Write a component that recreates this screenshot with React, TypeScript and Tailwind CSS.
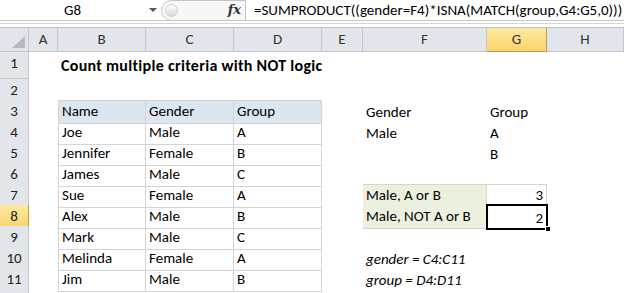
import React from 'react';

const font = "font-['Carlito','Lato',sans-serif]";
const gridCols = 'grid grid-cols-[29px_29px_88px_88px_88px_41px_124px_60px_1fr]';
const tbl = 'border-r border-b border-[#d4d4d4]';

type CellProps = {
  text?: string;
  className?: string;
};

function Cell({ text, className = '' }: CellProps) {
  return (
    <div className={`flex items-end overflow-visible whitespace-nowrap px-[3px] pb-[3px] text-[15px] leading-[17px] text-black ${className}`}>
      {text}
    </div>
  );
}

function RowHead({ n, active }: { n?: number; active?: boolean }) {
  return (
    <div
      className={`flex items-center justify-center border-r border-b text-[15px] text-[#222] ${
        active
          ? 'border-[#c29a4a] bg-gradient-to-b from-[#fde9a0] to-[#f9d46a]'
          : 'border-[#c3c7cd] bg-[#e2e5e9]'
      }`}
    >
      {n}
    </div>
  );
}

const people = [
  ['Joe', 'Male', 'A'],
  ['Jennifer', 'Female', 'B'],
  ['James', 'Male', 'C'],
  ['Sue', 'Female', 'A'],
  ['Alex', 'Male', 'B'],
  ['Mark', 'Male', 'C'],
  ['Melinda', 'Female', 'A'],
  ['Jim', 'Male', 'B'],
];

export default function App() {
  const colHeads = ['A', 'B', 'C', 'D', 'E', 'F', 'G', 'H'];

  const rightSide: Record<number, React.ReactNode[]> = {
    3: [<Cell key="e" />, <Cell key="f" text="Gender" />, <Cell key="g" text="Group" />, <Cell key="h" />],
    4: [<Cell key="e" />, <Cell key="f" text="Male" />, <Cell key="g" text="A" />, <Cell key="h" />],
    5: [<Cell key="e" />, <Cell key="f" />, <Cell key="g" text="B" />, <Cell key="h" />],
    6: [<Cell key="e" />, <Cell key="f" />, <Cell key="g" />, <Cell key="h" />],
    7: [
      <Cell key="e" />,
      <Cell key="f" text="Male, A or B" className={`${tbl} border-t bg-[#ebf1de]`} />,
      <Cell key="g" text="3" className={`${tbl} border-t justify-end`} />,
      <Cell key="h" />,
    ],
    8: [
      <Cell key="e" />,
      <Cell key="f" text="Male, NOT A or B" className={`${tbl} bg-[#ebf1de]`} />,
      <div key="g" className="relative">
        <div className="absolute left-[-1px] top-[-1px] right-[-1px] bottom-[-1px] flex items-end justify-end border-2 border-black bg-white pb-[1px] pr-[3px] text-[15px] leading-[17px] text-black">
          2
        </div>
        <div className="absolute bottom-[-3px] right-[-4px] h-[6px] w-[6px] border border-white bg-black" />
      </div>,
      <Cell key="h" />,
    ],
    9: [<Cell key="e" />, <Cell key="f" />, <Cell key="g" />, <Cell key="h" />],
    10: [<Cell key="e" />, <Cell key="f" text="gender = C4:C11" className="italic" />, <Cell key="g" />, <Cell key="h" />],
    11: [<Cell key="e" />, <Cell key="f" text="group = D4:D11" className="italic" />, <Cell key="g" />, <Cell key="h" />],
  };

  return (
    <div className={`h-[293px] w-[624px] overflow-hidden bg-white ${font}`}>
      {/* formula bar */}
      <div className="flex h-[21px] items-center border-b border-[#c6c6c6] bg-white">
        <div className="flex w-[145px] justify-center text-[15px] text-black">G8</div>
        <div className="flex w-[16px] justify-center">
          <div className="h-0 w-0 border-l-[4px] border-r-[4px] border-t-[4px] border-l-transparent border-r-transparent border-t-[#555]" />
        </div>
        <div className="flex h-[21px] w-[85px] items-center justify-between rounded-l-full border border-[#c4c4c4] bg-[#f7f7f7] pl-[3px] pr-[4px]">
          <div className="h-[13px] w-[13px] rounded-full border border-[#cfcfcf] bg-gradient-to-b from-[#ffffff] to-[#d9d9d9]" />
          <span className="font-['DejaVu_Serif',serif] text-[13px] font-bold italic text-[#333]">fx</span>
        </div>
        <div className="flex-1 whitespace-nowrap pl-[8px] text-[15px] text-black">
          =SUMPRODUCT((gender=F4)*ISNA(MATCH(group,G4:G5,0)))
        </div>
      </div>
      <div className="h-[5px] border-b border-[#bfc3c8] bg-white">
        <div className="mt-[2px] h-px bg-[#d4d4d4]" />
      </div>

      {/* column headers */}
      <div className={`${gridCols} h-[21px]`}>
        <div className="relative border-r border-b border-[#c3c7cd] bg-[#e2e5e9]">
          <svg className="absolute bottom-[3px] right-[3px]" width="13" height="12" viewBox="0 0 13 12">
            <polygon points="13,0 13,12 0,12" fill="#b5b9bf" />
          </svg>
        </div>
        {colHeads.map((c) => (
          <div
            key={c}
            className={`flex items-center justify-center border-r border-b text-[15px] text-[#333] ${
              c === 'G'
                ? 'border-[#c29a4a] bg-gradient-to-b from-[#fde9a0] to-[#f9d46a]'
                : 'border-[#c3c7cd] bg-[#e2e5e9]'
            }`}
          >
            {c}
          </div>
        ))}
      </div>

      {/* row 1 */}
      <div className={`${gridCols} h-[30px]`}>
        <RowHead n={1} />
        <Cell />
        <Cell text="Count multiple criteria with NOT logic" className="pb-[5px] text-[16px] font-bold tracking-[0.3px]" />
      </div>
      {/* row 2 */}
      <div className={`${gridCols} h-[21px]`}>
        <RowHead n={2} />
      </div>
      {/* row 3 */}
      <div className={`${gridCols} h-[21px]`}>
        <RowHead n={3} />
        <Cell />
        <Cell text="Name" className={`${tbl} border-t border-l bg-[#dce6f1]`} />
        <Cell text="Gender" className={`${tbl} border-t bg-[#dce6f1]`} />
        <Cell text="Group" className={`${tbl} border-t bg-[#dce6f1]`} />
        {rightSide[3]}
      </div>
      {people.map((p, i) => {
        const r = i + 4;
        return (
          <div key={r} className={`${gridCols} h-[21px]`}>
            <RowHead n={r} active={r === 8} />
            <Cell />
            <Cell text={p[0]} className={`${tbl} border-l`} />
            <Cell text={p[1]} className={tbl} />
            <Cell text={p[2]} className={tbl} />
            {rightSide[r]}
          </div>
        );
      })}
      <div className={`${gridCols} h-[21px]`}>
        <RowHead />
      </div>
    </div>
  );
}
